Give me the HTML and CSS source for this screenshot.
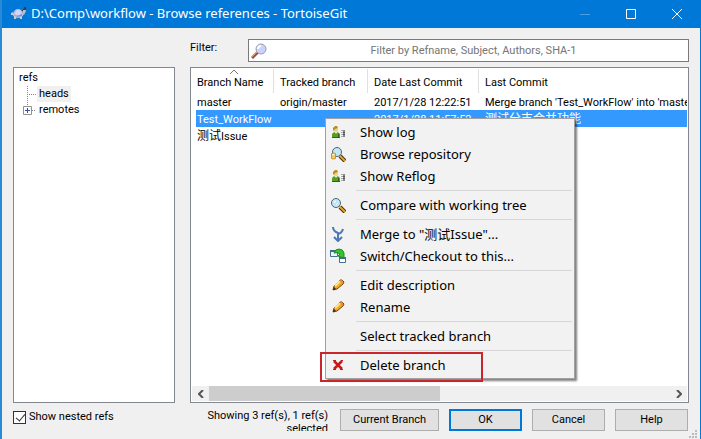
FILE: index.html
```html
<!DOCTYPE html>
<html lang="en">
<head>
<meta charset="utf-8">
<title>D:\Comp\workflow - Browse references - TortoiseGit</title>
<link rel="stylesheet" href="styles.css">
</head>
<body>
<svg class="sprites" aria-hidden="true">
  <symbol id="person" viewBox="0 0 16 16">
    <path d="M2 14v-4q1-2 4-2t4 2v4z" fill="#55a022"/>
    <path d="M2 13h8v1H2zM8 10h1v3H8z" fill="#2f6412"/>
    <path d="M4 4q2-1 4 0v3l-2 2-2-2z" fill="#f3d27c"/>
    <path d="M3 6V4l2-2h2l1 2-3 1-1 2z" fill="#b98a2a"/>
    <path d="M5 8l1 2 1-2z" fill="#fff"/>
    <path d="M11 6.500h2M11 8.500h2M11 10.500h2M11 12.500h2" stroke="#aaa"/>
    <path d="M14 6v7" stroke="#888" stroke-width="2"/>
    <path d="M13 8.500h2M13 10.500h2" stroke="#555"/>
  </symbol>
  <symbol id="lens" viewBox="0 0 16 16">
    <path d="M10 10l5 5" stroke="#4a2c08" stroke-width="4"/>
    <path d="M9 9l6 6" stroke="#e5a52c" stroke-width="2"/>
    <circle cx="6" cy="6" r="4.500" fill="#c3e6f5" stroke="#4c6478"/>
    <path d="M4 6q0-2 2-2M6 8l2-2" stroke="#fff" fill="none"/>
  </symbol>
  <symbol id="repo" viewBox="0 0 16 16">
    <path d="M10 10l5 5" stroke="#4a2c08" stroke-width="4"/>
    <path d="M9 9l6 6" stroke="#e5a52c" stroke-width="2"/>
    <circle cx="7" cy="6" r="4.500" fill="#c3e6f5" stroke="#4c6478"/>
    <path d="M1.500 7.500v5q2 1 4 0v-5q-2-1-4 0z" fill="#f6cd5c" stroke="#c59428"/>
    <path d="M2 8.500h3" stroke="#fff0a0"/>
  </symbol>
  <symbol id="merge" viewBox="0 0 16 16">
    <path d="M3 1q0 4 5 6v8M13 3q-1 4-5 5M4 11l4 4 4-4" fill="none" stroke="#4b78b6" stroke-width="2"/>
  </symbol>
  <symbol id="switch" viewBox="0 0 16 16">
    <path d="M.5 2.500h7v6h-7z" fill="#eef5fa" stroke="#47718e"/>
    <path d="M0 2h7v2H0z" fill="#3c7189"/>
    <path d="M9.500 9.500h6v5h-6z" fill="#fff" stroke="#47718e"/>
    <path d="M9 9h7v2H9z" fill="#3c7189"/>
    <path d="M4 5q1-4 5-4 4 0 5 4v5L8 8l2-2Q8 4 4 5z" fill="#35c52b" stroke="#15901f"/>
  </symbol>
  <symbol id="pencil" viewBox="0 0 16 16">
    <path d="M3 13l1-4 6-6h2l2 2-1 2-6 5z" fill="#f2aa2b" stroke="#75410d"/>
    <path d="M5 9l5-5" stroke="#ffe99b" stroke-width="2"/>
    <path d="M11 3h1l1 2-1 2-2-3z" fill="#e88c50"/>
    <path d="M3 13l1-3 2 2z" fill="#432405"/>
  </symbol>
  <symbol id="cross" viewBox="0 0 16 16">
    <path d="M4 4l8 8M12 4l-8 8" stroke="#c91818" stroke-width="2.500"/>
    <path d="M3 3.500h3M11 3.500h2M3 12.500h3M10 12.500h3" stroke="#c91818"/>
  </symbol>
</svg>

<div class="window">
  <header class="titlebar">
    <svg class="app-icon" viewBox="0 0 16 16" aria-hidden="true">
      <path d="M2 8q1-5 5-5t5 5v2l-5 2-5-2z" fill="#b9bdf0"/>
      <path d="M4 7l2-3h3l1 3-2 2H5z" fill="#d3d6fa"/>
      <path d="M1 9H0V7l2-1v3zM3 10h3l-1 3H3zM8 10h3v3H9z" fill="#c3cdd3"/>
      <path d="M2 9q4 3 9 1V8q-4 3-9 1z" fill="#7f8fb8"/>
      <path d="M11 8l1-4 2-2 1 3-2 4z" fill="#b5c2cd"/>
      <path d="M11 5l2-2M13 3l1-2 1 2-1 1z" fill="#333b4b" stroke="#333b4b"/>
    </svg>
    <h1 class="title">D:\Comp\workflow - Browse references - TortoiseGit</h1>
    <div class="window-controls">
      <button class="control" type="button" aria-label="Minimize" disabled><svg viewBox="0 0 10 10"><path d="M0 5.500h10" stroke="#4c9ee1"/></svg></button>
      <button class="control" type="button" aria-label="Maximize"><svg viewBox="0 0 10 10"><path d="M.5.5h9v9h-9z" fill="none" stroke="#fff"/></svg></button>
      <button class="control" type="button" aria-label="Close"><svg viewBox="0 0 10 10"><path d="M0 0l10 10M10 0L0 10" stroke="#fff"/></svg></button>
    </div>
  </header>

  <main class="content">
    <section class="sidebar">
      <div class="tree">
        <div class="tree-root">refs</div>
        <ul class="branches">
          <li class="node"><svg class="twig" viewBox="0 0 16 16" aria-hidden="true"><path d="M6.500 0v16M8 8.500h7" stroke="#888" stroke-dasharray="1 1"/></svg><span class="label current">heads</span></li>
          <li class="node"><svg class="twig" viewBox="0 0 16 16" aria-hidden="true"><path d="M6.500 0v4M11 8.500h4" stroke="#888" stroke-dasharray="1 1"/><path d="M2.500 4.500h8v8h-8z" fill="#fff" stroke="#919191"/><path d="M4 8.500h5M6.500 6v5" stroke="#3b4fa0"/></svg><span class="label">remotes</span></li>
        </ul>
      </div>
      <div class="option">
        <input class="check" id="nested" type="checkbox" checked>
        <label for="nested">Show nested refs</label>
      </div>
    </section>

    <section class="browser">
      <div class="filter">
        <label for="filter">Filter:</label>
        <div class="search">
          <svg class="search-icon" viewBox="0 0 16 16" aria-hidden="true">
            <path d="M1 15l6-6" stroke="#95503f" stroke-width="3"/>
            <path d="M1 14l5-5" stroke="#dd9a7d"/>
            <circle cx="10" cy="6" r="5" fill="#c9d2fa" stroke="#9a9db4"/>
            <path d="M7 6q0-3 3-3" fill="none" stroke="#fff" stroke-width="2"/>
          </svg>
          <input class="search-input" id="filter" type="text" placeholder="Filter by Refname, Subject, Authors, SHA-1">
        </div>
      </div>

      <div class="list">
        <div class="list-view">
          <table class="refs">
            <colgroup><col class="col-name"><col class="col-tracked"><col class="col-date"><col></colgroup>
            <thead><tr>
              <th><svg class="sort" viewBox="0 0 8 4" aria-hidden="true"><path d="M0 4l4-4 4 4" fill="none" stroke="#777"/></svg>Branch Name</th>
              <th>Tracked branch</th><th>Date Last Commit</th><th>Last Commit</th>
            </tr></thead>
            <tbody>
              <tr><td>master</td><td>origin/master</td><td>2017/1/28 12:22:51</td><td>Merge branch 'Test_WorkFlow' into 'master'</td></tr>
              <tr class="selected"><td colspan="2">Test_WorkFlow</td><td>2017/1/28 11:57:52</td><td><span class="han">测试分支合并功能</span></td></tr>
              <tr><td><span class="han">测试</span>Issue</td><td></td><td></td><td></td></tr>
            </tbody>
          </table>
        </div>
        <div class="scrollbar">
          <button class="arrow" type="button" aria-label="Scroll left"><svg viewBox="0 0 6 8"><path d="M5 0L1 4l4 4" fill="none" stroke="#555" stroke-width="2"/></svg></button>
          <div class="track"><div class="thumb"></div></div>
          <button class="arrow" type="button" aria-label="Scroll right"><svg viewBox="0 0 6 8"><path d="M1 0l4 4-4 4" fill="none" stroke="#555" stroke-width="2"/></svg></button>
        </div>

        <div class="menu" role="menu">
          <button class="item" type="button" role="menuitem"><svg class="icon"><use href="#person"/></svg>Show log</button>
          <button class="item" type="button" role="menuitem"><svg class="icon"><use href="#repo"/></svg>Browse repository</button>
          <button class="item" type="button" role="menuitem"><svg class="icon"><use href="#person"/></svg>Show Reflog</button>
          <hr class="divider">
          <button class="item" type="button" role="menuitem"><svg class="icon"><use href="#lens"/></svg>Compare with working tree</button>
          <hr class="divider">
          <button class="item" type="button" role="menuitem"><svg class="icon"><use href="#merge"/></svg>Merge to "测试Issue"...</button>
          <button class="item" type="button" role="menuitem"><svg class="icon"><use href="#switch"/></svg>Switch/Checkout to this...</button>
          <hr class="divider">
          <button class="item" type="button" role="menuitem"><svg class="icon"><use href="#pencil"/></svg>Edit description</button>
          <button class="item" type="button" role="menuitem"><svg class="icon"><use href="#pencil"/></svg>Rename</button>
          <hr class="divider">
          <button class="item" type="button" role="menuitem"><svg class="icon"></svg>Select tracked branch</button>
          <hr class="divider">
          <button class="item" type="button" role="menuitem"><svg class="icon"><use href="#cross"/></svg>Delete branch</button>
          <div class="callout"></div>
        </div>
      </div>

      <footer class="actions">
        <p class="status">Showing 3 ref(s), 1 ref(s) selected</p>
        <button class="button wide" type="button">Current Branch</button>
        <button class="button primary" type="button">OK</button>
        <button class="button" type="button">Cancel</button>
        <button class="button" type="button">Help</button>
      </footer>
    </section>
  </main>
  <svg class="grip" viewBox="0 0 8 8" aria-hidden="true"><path d="M6 0h2v2H6zM3 3h2v2H3zM6 3h2v2H6zM0 6h2v2H0zM3 6h2v2H3zM6 6h2v2H6z" fill="#bbb"/></svg>
</div>
</body>
</html>
```
FILE: styles.css
```css
* {
  box-sizing: border-box;
}

body {
  margin: 0;
  font: 11px/16px Roboto, "Noto Sans CJK SC", sans-serif;
  color: #000;
}

button,
input {
  font: inherit;
  color: inherit;
  margin: 0;
}

.sprites {
  position: absolute;
  width: 0;
  height: 0;
}

.window {
  position: relative;
  display: flex;
  flex-direction: column;
  height: 100vh;
  overflow: hidden;
  background: #f0f0f0;
  border-left: 2px solid #2b8ad6;
  border-right: 1px solid #0078d7;
}

/* Title bar */
.titlebar {
  display: flex;
  align-items: center;
  height: 28px;
  padding-left: 9px;
  background: #0078d7;
  color: #fff;
}

.app-icon {
  width: 16px;
  height: 16px;
}

.title {
  flex: 1;
  margin: 0 0 2px 4px;
  font: 400 13px/18px "Noto Sans", sans-serif;
  white-space: nowrap;
}

.window-controls {
  display: flex;
}

.control {
  display: grid;
  place-items: center;
  width: 46px;
  height: 24px;
  padding: 0;
  border: 0;
  background: none;
}

.control svg {
  width: 10px;
  height: 10px;
}

/* Main area */
.content {
  flex: 1;
  display: flex;
  gap: 15px;
  min-height: 0;
  padding: 11px 11px 8px 11px;
}

.sidebar {
  display: flex;
  flex-direction: column;
  width: 162px;
  padding-top: 28px;
}

.tree {
  flex: 1;
  padding: 2px 5px;
  border: 1px solid #828790;
  background: #fff;
}

.branches {
  margin: 0;
  padding: 0 0 0 2px;
  list-style: none;
}

.node {
  display: flex;
}

.twig {
  width: 16px;
  height: 16px;
}

.label {
  padding: 0 2px;
}

.current {
  background: #f0f0f0;
}

.option {
  display: flex;
  align-items: center;
  gap: 3px;
  height: 28px;
}

.check {
  appearance: none;
  width: 13px;
  height: 13px;
  border: 1px solid #333;
  background: #fff;
}

.check:checked::before {
  content: "";
  display: block;
  width: 4px;
  height: 8px;
  margin: 0 0 0 4px;
  border: solid #333;
  border-width: 0 1px 1px 0;
  transform: rotate(40deg);
}

.browser {
  flex: 1;
  display: flex;
  flex-direction: column;
  min-width: 0;
}

.filter {
  display: flex;
  height: 23px;
  margin-bottom: 5px;
}

.filter label {
  width: 58px;
  line-height: 18px;
}

.search {
  flex: 1;
  display: flex;
  align-items: center;
  padding-left: 2px;
  border: 1px solid #7a7a7a;
  background: #fff;
}

.search-icon {
  width: 16px;
  height: 16px;
}

.search-input {
  flex: 1;
  height: 18px;
  padding: 0 8px 0 0;
  border: 0;
  outline: 0;
  background: none;
  text-align: center;
}

.search-input::placeholder {
  color: #757575;
}

/* Reference list */
.list {
  position: relative;
  flex: 1;
  display: flex;
  flex-direction: column;
  padding: 1px;
  border: 1px solid #828790;
  background: #fff;
}

.list-view {
  flex: 1;
  padding-left: 4px;
  overflow: hidden;
}

.refs {
  width: 100%;
  table-layout: fixed;
  border-collapse: separate;
  border-spacing: 0;
}

.col-name {
  width: 78px;
}

.col-tracked {
  width: 94px;
}

.col-date {
  width: 111px;
}

.refs th,
.refs td {
  height: 17px;
  padding: 2px 0 0 6px;
  line-height: 15px;
  font-weight: 400;
  text-align: left;
  white-space: nowrap;
  overflow: hidden;
}

.refs th {
  position: relative;
  height: 24px;
  border-right: 1px solid #e0e0e0;
}

.refs th:last-child {
  border-right: 0;
}

.refs th:first-child,
.refs td:first-child {
  padding-left: 1px;
}

.han {
  font-size: 12px;
  line-height: 14px;
}

.sort {
  position: absolute;
  top: 1px;
  left: 34px;
  width: 8px;
  height: 4px;
}

.selected {
  background: #3399ff;
  color: #fff;
}

.scrollbar {
  display: flex;
  height: 15px;
  background: #f0f0f0;
}

.arrow {
  display: grid;
  place-items: center;
  width: 17px;
  padding: 0;
  border: 0;
  background: none;
}

.arrow svg {
  width: 6px;
  height: 8px;
}

.track {
  flex: 1;
  display: flex;
}

.thumb {
  width: 50%;
  background: #cdcdcd;
}

/* Context menu */
.menu {
  position: absolute;
  top: 50px;
  left: 134px;
  width: 250px;
  padding: 2px;
  border: 1px solid #a0a0a0;
  background: #f2f2f2;
  box-shadow: 2px 2px 2px #00000080;
  font-family: "Noto Sans", "Noto Sans CJK SC", sans-serif;
  font-size: 13px;
}

.item {
  display: flex;
  align-items: center;
  gap: 14px;
  width: 100%;
  height: 22px;
  padding: 0 2px;
  border: 0;
  background: none;
  white-space: nowrap;
}

.icon {
  width: 16px;
  height: 16px;
}

.divider {
  height: 1px;
  margin: 3px 0 3px 28px;
  border: 0;
  background: #d7d7d7;
}

.callout {
  position: absolute;
  bottom: -4px;
  left: -6px;
  width: 163px;
  height: 30px;
  border: 2px solid #c8262c;
}

/* Footer */
.actions {
  display: flex;
  gap: 10px;
  padding: 6px 1px 0 0;
}

.status {
  width: 130px;
  height: 22px;
  margin: 0 2px 0 auto;
  line-height: 13px;
  text-align: right;
  overflow: hidden;
}

.button {
  width: 73px;
  height: 22px;
  padding: 0;
  border: 1px solid #adadad;
  background: #e1e1e1;
}

.wide {
  width: 99px;
}

.primary {
  border: 2px solid #0078d7;
}

.grip {
  position: absolute;
  right: 3px;
  bottom: 1px;
  width: 8px;
  height: 8px;
}
```
